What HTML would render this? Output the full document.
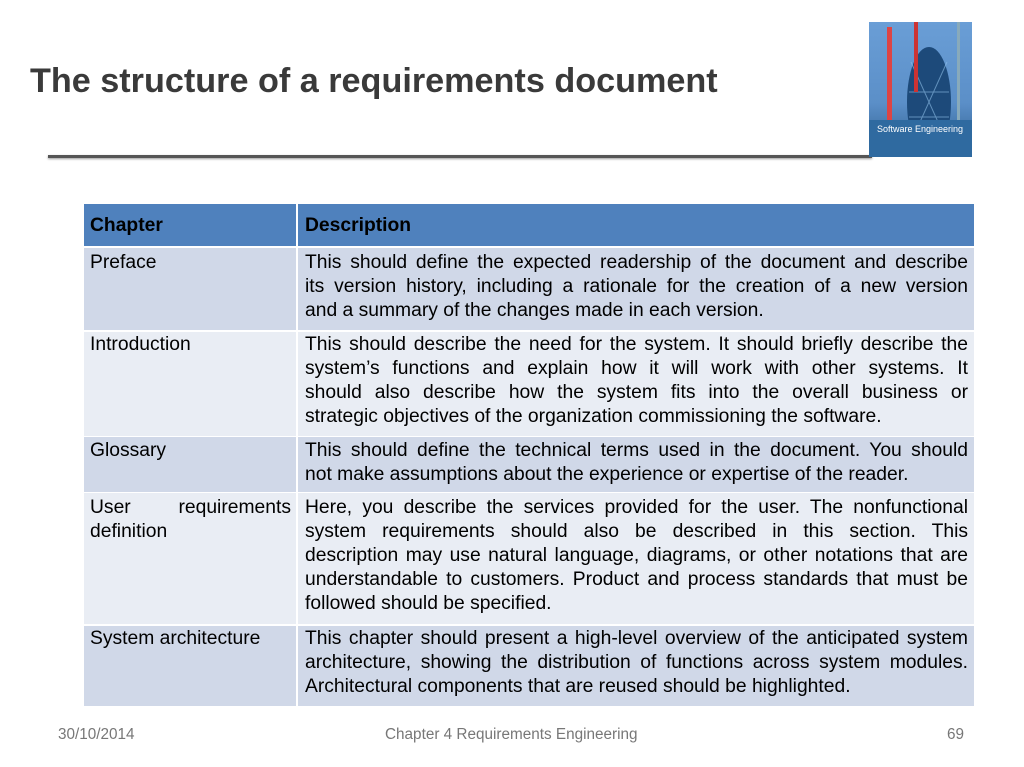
<!DOCTYPE html>
<html><head><meta charset="utf-8"><style>
body{margin:0;width:1024px;height:767px;background:#fff;position:relative;overflow:hidden;font-family:"Liberation Sans",Arial,sans-serif}
.t{position:absolute;left:30px;top:62px;font-size:34.2px;font-weight:bold;color:#3a3a3a}
.line{position:absolute;left:48px;top:155px;width:824px;height:3px;background:#555;box-shadow:0 1px 2px #999}
.img{position:absolute;left:869px;top:22px;width:103px;height:135px;background:linear-gradient(#6a9ed6,#5b8fc8 60%,#2a5a8a);overflow:hidden}
.c{position:absolute;box-sizing:border-box;font-size:19.3px;line-height:24px;color:#000;padding-top:1px}
.l{left:84px;width:212px;padding-left:6px;padding-right:5px}
.r{left:298px;width:676px;padding-left:7px;padding-right:6px}
.h{background:#4f81bd;font-weight:bold;padding-top:10px}
.a{background:#d0d8e8}.b{background:#e9edf4}
.r span{display:block;white-space:nowrap;text-align:justify;text-align-last:justify}
.r span.e{text-align-last:left}
.f{position:absolute;top:726px;font-size:15.3px;color:#777}
</style></head><body>
<div class="t">The structure of a requirements document</div>
<div class="line"></div>
<div class="img">
<svg width="103" height="135"><ellipse cx="60" cy="80" rx="22" ry="55" fill="#1d4a7a"/><path d="M42 40 L78 120 M78 40 L42 120 M40 70 L80 70 M40 95 L80 95" stroke="#8fc0e8" stroke-width="1" opacity=".6"/><rect x="18" y="5" width="5" height="95" fill="#d44" /><rect x="45" y="0" width="4" height="70" fill="#c33"/><rect x="88" y="0" width="3" height="105" fill="#8ab"/><rect x="0" y="98" width="103" height="37" fill="#2f6aa0"/><text x="8" y="110" font-size="9" fill="#fff" font-family="Liberation Sans">Software Engineering</text></svg>
</div>

<div class="c l h" style="top:204px;height:42px">Chapter</div>
<div class="c r h" style="top:204px;height:42px">Description</div>

<div class="c l a" style="top:248px;height:82px;padding-top:3px">Preface</div>
<div class="c r a" style="top:248px;height:82px;padding-top:3px"><span>This should define the expected readership of the document and describe</span><span>its version history, including a rationale for the creation of a new version</span><span class="e">and a summary of the changes made in each version.</span></div>

<div class="c l b" style="top:332px;height:104px">Introduction</div>
<div class="c r b" style="top:332px;height:104px"><span>This should describe the need for the system. It should briefly describe the</span><span>system’s functions and explain how it will work with other systems. It</span><span>should also describe how the system fits into the overall business or</span><span class="e">strategic objectives of the organization commissioning the software.</span></div>

<div class="c l a" style="top:437px;height:55px;padding-top:2px">Glossary</div>
<div class="c r a" style="top:437px;height:55px;padding-top:2px"><span>This should define the technical terms used in the document. You should</span><span class="e">not make assumptions about the experience or expertise of the reader.</span></div>

<div class="c l b" style="top:493px;height:131px;padding-top:3px"><span style="display:flex;justify-content:space-between"><span>User</span><span>requirements</span></span>definition</div>
<div class="c r b" style="top:493px;height:131px;padding-top:3px"><span>Here, you describe the services provided for the user. The nonfunctional</span><span>system requirements should also be described in this section. This</span><span>description may use natural language, diagrams, or other notations that are</span><span>understandable to customers. Product and process standards that must be</span><span class="e">followed should be specified.</span></div>

<div class="c l a" style="top:626px;height:80px">System architecture</div>
<div class="c r a" style="top:626px;height:80px"><span>This chapter should present a high-level overview of the anticipated system</span><span>architecture, showing the distribution of functions across system modules.</span><span class="e">Architectural components that are reused should be highlighted.</span></div>

<div class="f" style="left:58px">30/10/2014</div>
<div class="f" style="left:385px">Chapter 4 Requirements Engineering</div>
<div class="f" style="left:947px">69</div>
</body></html>
